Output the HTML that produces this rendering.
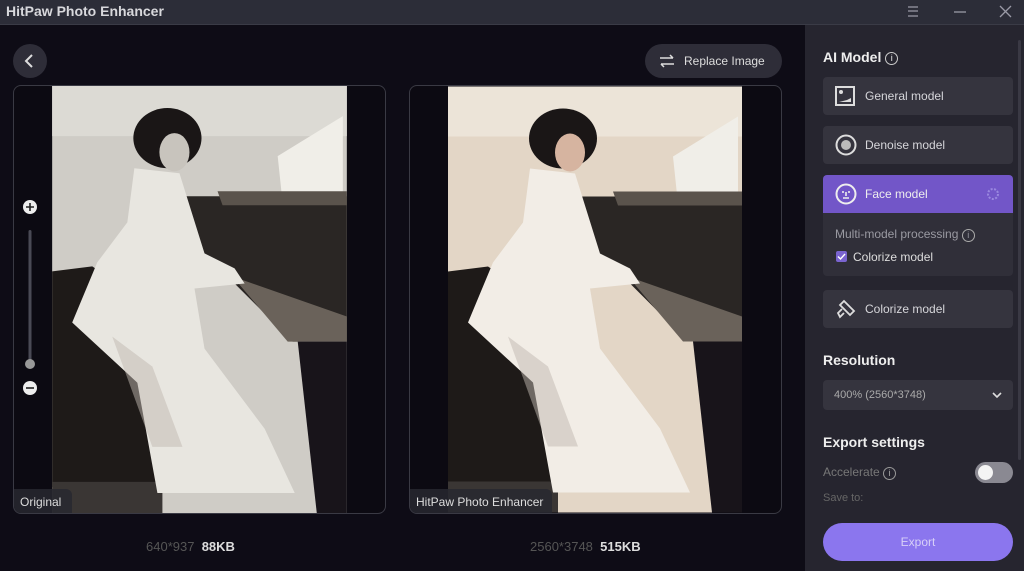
<!DOCTYPE html>
<html><head><meta charset="utf-8"><style>
*{margin:0;padding:0;box-sizing:border-box}
body{width:1024px;height:571px;overflow:hidden;background:#0e0c16;font-family:"Liberation Sans",sans-serif;position:relative;color:#ddd}
.abs{position:absolute}
.title{left:0;top:0;width:1024px;height:25px;background:#2c2d38;border-bottom:1px solid #3a3b46}
.title span{position:absolute;left:6px;top:3px;font-weight:bold;font-size:14px;color:#d8d8dc}
.side{left:805px;top:25px;width:219px;height:546px;background:#26252f}
.btn{position:absolute;left:823px;width:190px;height:38px;background:#35343e;border-radius:4px;font-size:12px;color:#d6d6da}
.btn .t{position:absolute;left:42px;top:12px}
.h{position:absolute;left:823px;font-weight:bold;font-size:14px;color:#eee}
.frame{border:1.5px solid #3a3a44;border-radius:8px;overflow:hidden;background:#0c0a12}
</style></head><body>
<div class="abs title"><span>HitPaw Photo Enhancer</span>
<svg class="abs" style="left:900px;top:3px" width="124" height="18" viewBox="0 0 124 18"><g stroke="#9a9aa6" stroke-width="1.3" fill="none"><path d="M8 4h10M8 8h10M8 13h10"/><path d="M54 9h12"/><path d="M100 3l11 11M111 3l-11 11"/></g></svg></div>

<div class="abs" style="left:13px;top:44px;width:34px;height:34px;border-radius:50%;background:#2e2d38"><svg width="34" height="34"><path d="M19 11l-6 6 6 6" stroke="#ddd" stroke-width="2" fill="none"/></svg></div>
<div class="abs" style="left:645px;top:44px;width:137px;height:34px;border-radius:17px;background:#2e2d38;font-size:12px;color:#ddd"><svg class="abs" style="left:14px;top:10px" width="16" height="14"><g stroke="#ddd" stroke-width="1.5" fill="none"><path d="M1 4h13M11 1l3 3M15 10H2M5 13l-3-3"/></g></svg><span class="abs" style="left:39px;top:10px">Replace Image</span></div>

<svg width="0" height="0" style="position:absolute"><defs>
<symbol id="ph" viewBox="0 0 294 426">
<rect width="294" height="426" fill="var(--wall)"/>
<rect x="0" y="0" width="294" height="50" fill="var(--wall2)"/>
<path d="M225 70l65-40v130l-55 5z" fill="#f0eee8"/>
<path d="M133 110h161v145H240l-60-60h-30z" fill="#2a2624"/>
<path d="M165 105h129v14H170z" fill="#5a534c"/>
<path d="M180 190l114 40v25H235z" fill="#6a625a"/>
<path d="M0 185l40-5 60 40 20 180H0z" fill="#1e1a18"/>
<path d="M245 255h49v171h-30z" fill="#18141a"/>
<path d="M0 395h110v31H0z" fill="#3a3634"/>
<path d="M82 82l45 5 25 80 30 15 10 15-50 5 10 60 60 80 30 64H105l-20-110-65-60 25-60 30-40z" fill="var(--dress)"/>
<path d="M60 250l40 30 30 80-30 0z" fill="#c0b8b0" opacity=".5"/>
<ellipse cx="115" cy="52" rx="34" ry="30" fill="#1a1616"/>
<ellipse cx="122" cy="66" rx="15" ry="19" fill="var(--skin)"/>
</symbol></defs></svg>

<div class="abs frame" style="left:13px;top:85px;width:373px;height:429px">
<svg class="abs" style="left:38px;top:0" width="295" height="427" preserveAspectRatio="none"><use href="#ph" style="--wall:#cfccc6;--wall2:#dcdad4;--dress:#e8e6e0;--skin:#c8c4bd"/></svg>
<div class="abs" style="left:0;bottom:0;width:58px;height:24px;background:rgba(40,40,48,.85);border-radius:0 6px 0 0;font-size:12px;color:#ddd;padding:6px 0 0 6px">Original</div>
</div>
<div class="abs frame" style="left:409px;top:85px;width:373px;height:429px">
<svg class="abs" style="left:38px;top:0" width="294" height="427" preserveAspectRatio="none"><use href="#ph" style="--wall:#e3d6c6;--wall2:#ece4d8;--dress:#f2ede6;--skin:#d6b4a0"/></svg>
<div class="abs" style="left:0;bottom:0;width:142px;height:24px;background:rgba(40,40,48,.85);border-radius:0 6px 0 0;font-size:12px;color:#ddd;padding:6px 0 0 6px">HitPaw Photo Enhancer</div>
</div>

<svg class="abs" style="left:20px;top:198px" width="22" height="200"><circle cx="10" cy="9" r="7" fill="#eee"/><path d="M6 9h8M10 5v8" stroke="#222" stroke-width="1.6"/><rect x="8.5" y="32" width="3" height="130" rx="1.5" fill="#4a4a55"/><circle cx="10" cy="166" r="5" fill="#999"/><circle cx="10" cy="190" r="7" fill="#eee"/><path d="M6 190h8" stroke="#222" stroke-width="1.6"/></svg>

<div class="abs" style="left:146px;top:539px;font-size:13px"><span style="color:#555">640*937</span> &nbsp;<span style="color:#ddd;font-weight:bold">88KB</span></div>
<div class="abs" style="left:530px;top:539px;font-size:13px"><span style="color:#555">2560*3748</span> &nbsp;<span style="color:#ddd;font-weight:bold">515KB</span></div>

<div class="abs side"></div>
<div class="abs" style="left:1018px;top:40px;width:3px;height:420px;background:#3a3944;border-radius:2px"></div>
<div class="h" style="top:49px">AI Model <span style="display:inline-block;width:13px;height:13px;border:1.3px solid #ccc;border-radius:50%;font-size:9px;text-align:center;line-height:11px;font-weight:normal;vertical-align:1px">i</span></div>
<div class="btn" style="top:77px"><svg class="abs" style="left:12px;top:9px" width="20" height="20"><rect x="1" y="1" width="18" height="18" fill="none" stroke="#ddd" stroke-width="2"/><circle cx="6" cy="6" r="2" fill="#ddd"/><path d="M4 16h12v-4l-4 2z" fill="#ddd"/></svg><span class="t">General model</span></div>
<div class="btn" style="top:126px"><svg class="abs" style="left:12px;top:8px" width="22" height="22"><circle cx="11" cy="11" r="9.5" fill="none" stroke="#ddd" stroke-width="2"/><circle cx="11" cy="11" r="5" fill="#bbb"/></svg><span class="t">Denoise model</span></div>
<div class="btn" style="top:175px;height:38px;background:#7256c8;border-radius:4px 4px 0 0"><svg class="abs" style="left:12px;top:8px" width="22" height="22"><circle cx="11" cy="11" r="9.5" fill="none" stroke="#eee" stroke-width="2"/><path d="M8 8v2M14 8v2M11 9v4M8 15h6" stroke="#eee" stroke-width="1.6"/></svg><span class="t" style="color:#eee">Face model</span><svg class="abs" style="left:163px;top:12px" width="14" height="14"><circle cx="7" cy="7" r="5" fill="none" stroke="#9a88e0" stroke-width="2" stroke-dasharray="2 1.5"/></svg></div>
<div class="abs" style="left:823px;top:213px;width:190px;height:63px;background:#302f39;border-radius:0 0 4px 4px;font-size:12px">
<div class="abs" style="left:12px;top:14px;color:#9a9aa2">Multi-model processing <span style="display:inline-block;width:13px;height:13px;border:1.3px solid #aaa;border-radius:50%;font-size:9px;text-align:center;line-height:11px">i</span></div>
<div class="abs" style="left:13px;top:38px;width:11px;height:11px;background:#7a64d0;border-radius:2px"></div><svg class="abs" style="left:13px;top:38px" width="11" height="11"><path d="M2 5.5l2.5 2.5 4.5-5" stroke="#fff" stroke-width="1.4" fill="none"/></svg>
<div class="abs" style="left:30px;top:37px;color:#ddd">Colorize model</div></div>
<div class="btn" style="top:290px"><svg class="abs" style="left:12px;top:8px" width="22" height="22"><g fill="none" stroke="#ddd" stroke-width="1.8"><path d="M9 3l10 10-4 4L5 7z"/><path d="M7 11l-4 4 2 4 4-4"/></g></svg><span class="t">Colorize model</span></div>
<div class="h" style="top:352px">Resolution</div>
<div class="btn" style="top:380px;height:30px"><span class="abs" style="left:11px;top:9px;font-size:11px;color:#aaa">400% (2560*3748)</span><svg class="abs" style="left:169px;top:11px" width="10" height="8"><path d="M1 2l4 4 4-4" stroke="#ddd" stroke-width="1.6" fill="none"/></svg></div>
<div class="h" style="top:434px">Export settings</div>
<div class="abs" style="left:823px;top:465px;font-size:12px;color:#777">Accelerate <span style="display:inline-block;width:13px;height:13px;border:1.3px solid #999;border-radius:50%;font-size:9px;text-align:center;line-height:11px;color:#aaa">i</span></div>
<div class="abs" style="left:975px;top:462px;width:38px;height:21px;border-radius:11px;background:#8a8992"><div class="abs" style="left:3px;top:3px;width:15px;height:15px;border-radius:50%;background:#f4f4f4"></div></div>
<div class="abs" style="left:823px;top:492px;font-size:11px;color:#666;height:9px;overflow:hidden">Save to:</div>
<div class="abs" style="left:823px;top:523px;width:190px;height:38px;border-radius:19px;background:#8b76ee;font-size:12px;color:#d8d0f8;text-align:center;line-height:38px">Export</div>
</body></html>
